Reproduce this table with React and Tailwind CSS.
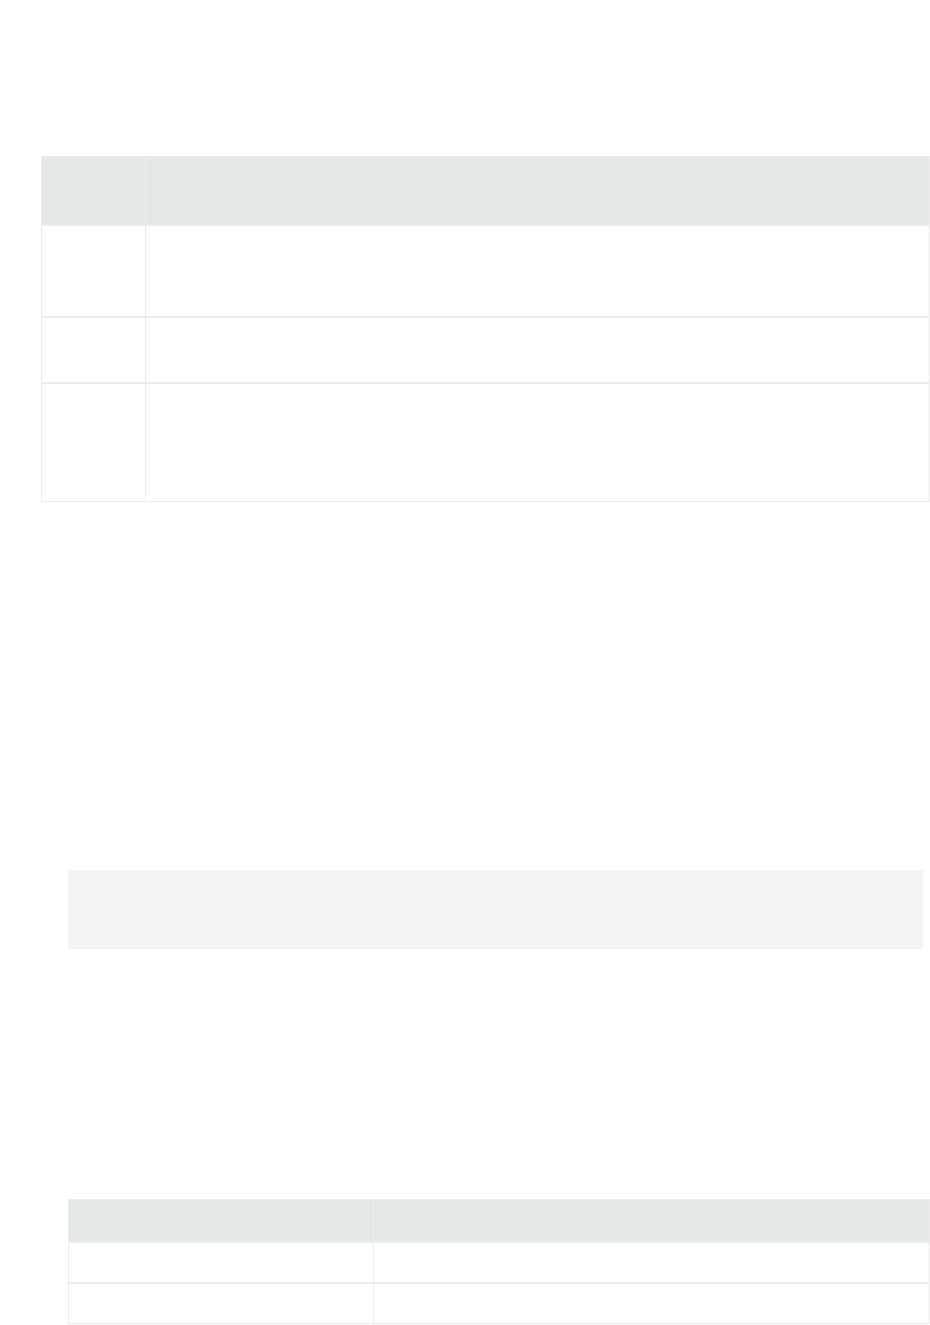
import React from "react";

function Row({ h, cols, header, last }) {
  return (
    <div
      className={`grid ${cols} ${header ? "bg-[#e3e7e8]" : "bg-white"} ${last ? "" : "border-b-2 border-[#ececec]"}`}
      style={{ height: h }}
    >
      <div className="border-r border-[#ececec]" />
      <div />
    </div>
  );
}

export default function App() {
  return (
    <div className="w-[930px] min-h-[1325px] bg-white font-['Liberation_Sans',sans-serif] flex flex-col">
      <div className="h-[156px]" />
      <div className="ml-[41px] w-[889px] border border-[#ececec] flex flex-col">
        <Row h={69} cols="grid-cols-[104px_1fr]" header />
        <Row h={92} cols="grid-cols-[104px_1fr]" />
        <Row h={66} cols="grid-cols-[104px_1fr]" />
        <Row h={117} cols="grid-cols-[104px_1fr]" last />
      </div>
      <div className="h-[368px]" />
      <div className="ml-[68px] w-[855px] h-[79px] bg-[#f4f4f4]" />
      <div className="h-[250px]" />
      <div className="ml-[68px] w-[862px] border border-[#ececec] flex flex-col">
        <Row h={43} cols="grid-cols-[305px_1fr]" header />
        <Row h={41} cols="grid-cols-[305px_1fr]" />
        <Row h={39} cols="grid-cols-[305px_1fr]" last />
      </div>
    </div>
  );
}
